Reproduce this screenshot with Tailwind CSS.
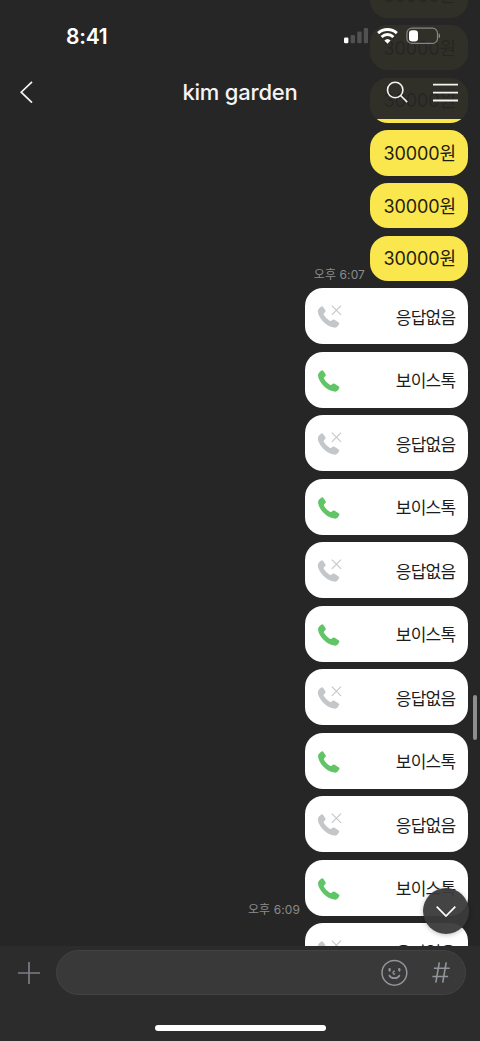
<!DOCTYPE html>
<html lang="ko">
<head>
<meta charset="utf-8">
<title>kim garden</title>
<script src="https://cdn.jsdelivr.net/npm/@tailwindcss/browser@4"></script>
</head>
<body class="bg-[#262626] font-['Inter','Noto_Sans_CJK_KR',sans-serif]">
<svg class="hidden">
  <symbol id="call" viewBox="0 0 24 24">
    <path d="M2.2 3.4 4.4 1.5Q5.5.8 6.2 1.8L8.6 5.3Q9.1 6.2 8.4 7L7 8.5Q6.6 9 7.1 10Q9.2 13.6 12.8 15.8Q13.7 16.3 14.2 15.9L15.8 14.7Q16.8 14.1 17.7 14.7L21.9 17.5Q22.9 18.3 22.2 19.3L20.7 21.6Q19.6 23 17.2 22.6Q10.8 21.4 6 16.3Q1.4 11.2 1 6.6Q.9 4.6 2.2 3.4Z" fill="currentColor"/>
  </symbol>
  <symbol id="missed" viewBox="0 0 28 24">
    <use href="#call" x="-.2" y="0" width="24" height="24"/>
    <path d="M14.8 .6 24 9.8M24 .6 14.8 9.8" stroke="currentColor" stroke-width="1.1" fill="none"/>
  </symbol>
</svg>
<div class="relative flex h-[1041px] w-[480px] flex-col overflow-hidden">
  <main class="h-[946px] shrink-0 overflow-hidden pr-3">
    <div id="list" class="-mt-[27.4px] flex flex-col items-end"></div>
  </main>

  <footer class="flex h-[95px] shrink-0 flex-col items-center bg-[#2c2c2c] pt-1">
    <div class="flex h-[45px] w-full items-center pl-[18px] pr-3.5">
      <svg class="h-[22px] w-[22px]" viewBox="0 0 22 22" stroke="#7c7e86" stroke-width="1.7"><path d="M0 11h22M11 0v22"/></svg>
      <div class="ml-4 flex h-[45px] flex-1 items-center justify-end rounded-full border border-[#434343] bg-[#393939] pr-[15px]">
        <svg class="h-[28px] w-[28px]" viewBox="0 0 28 28" fill="none" stroke="#92949b" stroke-width="1.5" stroke-linecap="round">
          <circle cx="14.4" cy="13.8" r="12.4"/>
          <path d="M9.4 16.6Q10.6 19.2 14.4 19.2T19.4 16.6" stroke-width="1.7"/>
          <path d="M14.5 12.1Q12.9 12.2 13.1 13.9Q13.3 15.3 14.6 15" stroke-width="1.3"/>
          <path d="M9.6 10.1v1.5M19.3 10.1v1.5" stroke-width="2.3"/>
        </svg>
        <svg class="ml-6 h-[21px] w-[18px]" viewBox="0 0 18 21" fill="none" stroke="#92949b" stroke-width="1.6">
          <path d="M7.3.3 3.8 20.7M14.2.3 10.7 20.7M1.9 6.3h15.8M.4 14.5h15.7"/>
        </svg>
      </div>
    </div>
    <div class="mt-[30px] h-[6px] w-[171px] rounded-full bg-white"></div>
  </footer>

  <header class="absolute inset-x-0 top-0 h-[119px] bg-[#262626]/95 text-[#f4f4f4]">
    <div class="flex h-[46px] items-start justify-between pl-[66px] pr-[40px] pt-[24px]">
      <div class="text-[21px] font-semibold leading-[25px] tracking-[-0.2px] text-white">8:41</div>
      <div class="flex items-start pt-[3px]">
        <svg class="mt-px h-[16px] w-[24px]" viewBox="0 0 24 16">
          <rect x="0" y="9.5" width="4.4" height="5.7" rx="1.2" fill="#fff"/>
          <g fill="#515151"><rect x="6.6" y="7" width="4.4" height="8.2" rx="1.2"/><rect x="13.2" y="3.6" width="4.4" height="11.6" rx="1.2"/><rect x="19.8" y="0" width="4.4" height="15.2" rx="1.2"/></g>
        </svg>
        <svg class="ml-[9px] mt-[.5px] h-[16px] w-[21px]" viewBox="0 0 21 16" fill="none" stroke="#fff" stroke-width="2.9">
          <path d="M1.1 5.1Q5.1 1.5 10.5 1.5T19.9 5.1M4.6 9Q7.2 6.5 10.5 6.5T16.4 9"/>
          <path d="M10.5 15.7 7.4 12.5Q10.5 9.5 13.6 12.5Z" fill="#fff" stroke="none"/>
        </svg>
        <svg class="ml-[8px] h-[18px] w-[34px]" viewBox="0 0 34 18">
          <rect x=".9" y="1.2" width="30.6" height="15.2" rx="5" fill="none" stroke="#858585" stroke-width="1.2"/>
          <rect x="3" y="3.2" width="9" height="11.2" rx="3.2" fill="#fff"/>
          <path d="M32.6 6.3Q34.4 7.2 34.4 8.8T32.6 11.3Z" fill="#858585"/>
        </svg>
      </div>
    </div>
    <div class="grid h-[92px] grid-cols-[1fr_auto_1fr] items-center px-5">
      <svg class="h-[22px] w-[13px]" viewBox="0 0 13 22" fill="none" stroke="currentColor" stroke-width="1.7"><path d="M12 .8 1.2 11.2 12 21.6"/></svg>
      <h1 class="text-[22px] font-medium leading-7 tracking-[-0.2px]">kim garden</h1>
      <div class="flex items-center justify-end gap-[25px] pr-0.5">
        <svg class="h-[22px] w-[22px]" viewBox="0 0 22 22" fill="none" stroke="currentColor" stroke-width="1.6"><circle cx="9.2" cy="9" r="7.7"/><path d="m14.6 14.5 6.6 6.6"/></svg>
        <svg class="h-[19px] w-[25px]" viewBox="0 0 25 19" stroke="currentColor" stroke-width="1.8"><path d="M0 1.7h25M0 9.6h25M0 17.5h25"/></svg>
      </div>
    </div>
  </header>

  <div class="absolute right-[3.5px] top-[695px] h-[45px] w-[3.5px] rounded-full bg-[#8e8e8e]"></div>
  <button class="absolute left-[422.5px] top-[887.5px] flex h-[46px] w-[46px] items-center justify-center rounded-full bg-[#3a3a3a]/95 shadow-[0_1px_5px_rgba(0,0,0,0.25)]">
    <svg class="mt-0.5 h-[11px] w-[20px]" viewBox="0 0 20 11" fill="none" stroke="#fff" stroke-width="1.7"><path d="M.7.7 10 10 19.3.7"/></svg>
  </button>
</div>
<script>
const pay = t => `<div class="mb-[7.4px] flex shrink-0 items-end gap-[5px]">${t}<div class="flex h-[45.2px] w-[98px] items-center justify-end rounded-[18px] bg-[#fae64d] pr-[12px] pt-[2px] text-[18px] leading-none tracking-[-0.1px] text-[#1f1d12]"><span class="whitespace-nowrap">30000원</span></div></div>`;
const time = s => `<time class="-mb-px whitespace-nowrap text-[12px] leading-[14px] tracking-[0.1px] text-[#8b8b8b]">${s}</time>`;
const call = (missed, t) => `<div class="mb-[7.5px] flex shrink-0 items-end gap-[5px]">${t}<div class="flex h-[56px] w-[163px] items-center justify-between rounded-[18px] bg-white pl-[12px] pr-[12.5px] pt-[2px] text-[17px] tracking-[-0.7px] text-[#1c1c1c]">${missed
  ? '<svg class="h-[24px] w-[28px] text-[#c3c7ca]"><use href="#missed"/></svg><span class="pt-[3px]">응답없음</span>'
  : '<svg class="h-[24px] w-[24px] text-[#61c567]"><use href="#call"/></svg><span class="pt-[3px]">보이스톡</span>'}</div></div>`;
let rows = '';
for (let i = 0; i < 6; i++) rows += pay(i === 5 ? time('오후 6:07') : '');
for (let i = 0; i < 11; i++) rows += call(i % 2 === 0, i === 9 ? time('오후 6:09') : '');
document.getElementById('list').innerHTML = rows;
</script>
</body>
</html>
